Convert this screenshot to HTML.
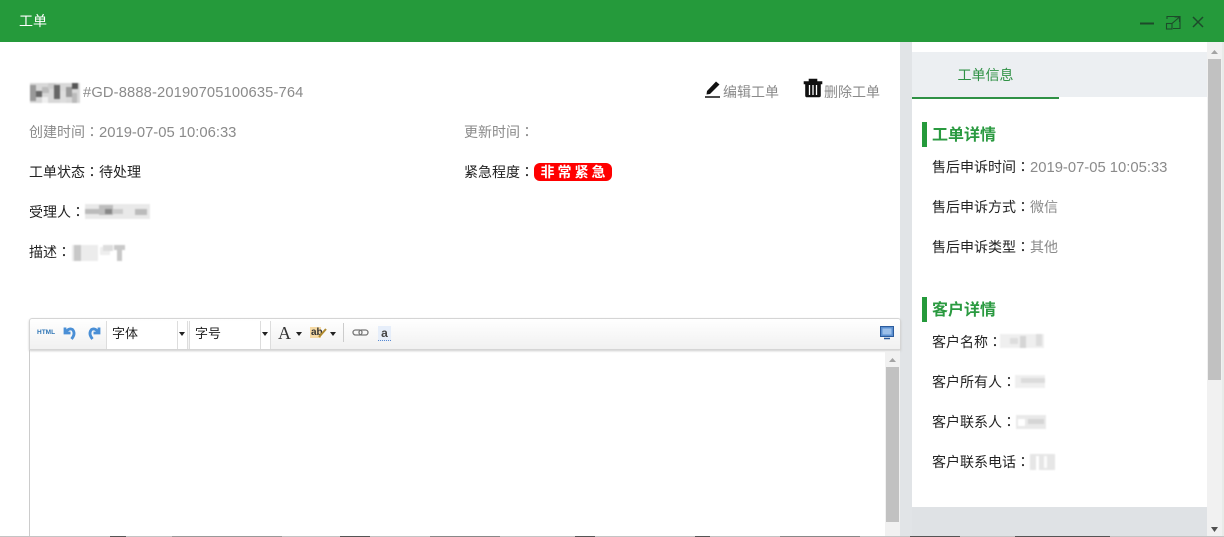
<!DOCTYPE html>
<html><head><meta charset="utf-8"><title>工单</title>
<style>
html,body{margin:0;padding:0;width:1224px;height:537px;overflow:hidden;background:#fff}
body{position:relative;font:14px/20px "Liberation Sans","Noto Sans CJK SC",sans-serif;color:#222}
.a{position:absolute;white-space:nowrap}
.g{color:#8a8a8a}
.d{font-size:14.8px}
i{font-style:normal;font-family:"Noto Sans CJK TC",sans-serif}
.h{font-size:16px;font-weight:700;color:#2a9a40;line-height:24px}
.bar{position:absolute;left:922px;width:5px;height:25px;background:#259a3b}
svg{position:absolute;overflow:visible}
svg.b{filter:blur(.7px)}
.sel{position:absolute;top:321px;height:28px;background:#fff;border-left:1px solid #ddd;border-right:1px solid #ddd;box-sizing:border-box;font-size:13px;line-height:25px;padding-left:5px}
.sel:after{content:"";position:absolute;right:9px;top:0;height:28px;width:1px;background:#ddd}
.tri{position:absolute;width:0;height:0;border:3px solid transparent;border-top:4px solid #222;border-bottom:0}
</style></head><body>
<div class="a" style="left:0;top:0;width:1224px;height:42px;background:#259a3b"></div>
<div class="a" style="left:19px;top:11px;color:#fff;font-size:14px">工单</div>
<svg style="left:1130px;top:8px" width="85" height="30" fill="none" stroke="#1d4a2a">
<path d="M10 15.5H24" stroke-width="2"/>
<path d="M37 11V8.500H50V20.500H43M42 15.500L49 9.500M44.500 9H49.500V14" stroke-width="1.100"/><rect x="36.500" y="15.500" width="5.500" height="5.500" stroke-width="1.100"/>
<path d="M63 9L73 19M73 9L63 19" stroke-width="1.500"/></svg>

<div class="a" style="left:900px;top:42px;width:12px;height:495px;background:#e1e4e7"></div>
<div class="a" style="left:912px;top:507px;width:295px;height:30px;background:#dfe2e5"></div>
<div class="a" style="left:912px;top:52px;width:295px;height:45px;background:#eceff2"></div>
<div class="a" style="left:912px;top:97px;width:147px;height:2px;background:#2f9145"></div>
<div class="a" style="left:957.500px;top:65px;font-size:14px;color:#2f9145">工单信息</div>
<div class="a" style="left:1207px;top:42px;width:15px;height:495px;background:#f1f1f1"></div>
<div class="a" style="left:1208px;top:59px;width:13px;height:321px;background:#c1c1c1"></div>
<div class="a" style="left:1222px;top:42px;width:2px;height:495px;background:#e8ebe9"></div>
<svg style="left:1207px;top:48px" width="15" height="8"><path d="M4 6L7.500 2L11 6Z" fill="#a3a3a3"/></svg>
<svg style="left:1207px;top:526px" width="15" height="8"><path d="M4 1H11L7.500 6Z" fill="#505050"/></svg>

<!-- title row -->
<svg class="b" style="left:30px;top:83px" width="52" height="22" shape-rendering="crispEdges">
<rect width="50" height="20" fill="#d8d8d8"/><rect x="0" y="2" width="6" height="16" fill="#999"/><rect x="6" y="8" width="6" height="6" fill="#666"/><rect x="12" y="4" width="7" height="6" fill="#bbb"/><rect x="18" y="0" width="8" height="6" fill="#ccc"/><rect x="24" y="2" width="6" height="14" fill="#666"/><rect x="30" y="8" width="6" height="12" fill="#ddd"/><rect x="36" y="4" width="6" height="10" fill="#999"/><rect x="42" y="0" width="6" height="6" fill="#555"/><rect x="42" y="10" width="5" height="10" fill="#bbb"/><rect x="12" y="14" width="6" height="6" fill="#f0f0f0"/></svg>
<div class="a g" style="left:83px;top:82.500px;font-size:14.7px;letter-spacing:.15px">#GD-8888-20190705100635-764</div>
<svg style="left:704px;top:79px" width="20" height="20"><path d="M3 12L12 2.500L15.500 5.500L6 15L2.500 15.500Z" fill="#111"/><path d="M1 18H16" stroke="#111" stroke-width="1.500"/></svg>
<div class="a g" style="left:723px;top:82px;font-size:14px">编辑工单</div>
<svg style="left:803px;top:77px" width="20" height="21"><path d="M1 4.500H19V7H17.500V18.500Q17.500 20 16 20H4Q2.500 20 2.500 18.500V7H1ZM6 4.500V2H14V4.500" fill="#111" stroke="#111" stroke-width=".6"/><path d="M6.500 8V18M10 8V18M13.500 8V18" stroke="#fff" stroke-width="1.300"/></svg>
<div class="a g" style="left:824px;top:82px;font-size:14px">删除工单</div>

<div class="a g" style="left:29px;top:122px">创建时间<i>：</i><span class="d">2019-07-05 10:06:33</span></div>
<div class="a g" style="left:464px;top:122px">更新时间<i>：</i></div>
<div class="a" style="left:29px;top:162px">工单状态<i>：</i>待处理</div>
<div class="a" style="left:464px;top:162px">紧急程度<i>：</i></div>
<div class="a" style="left:534px;top:163px;width:78px;height:18px;padding-left:3px;box-sizing:border-box;background:#f00;border-radius:6px;color:#fff;font-size:14px;font-weight:700;line-height:18px;text-align:center;letter-spacing:3px">非常紧急</div>
<div class="a" style="left:29px;top:202px">受理人<i>：</i></div>
<svg class="b" style="left:85px;top:204px" width="66" height="16" shape-rendering="crispEdges"><rect width="65" height="15" fill="#e9e9e9"/><rect y="5" x="0" width="14" height="5" fill="#bbb"/><rect x="14" y="1" width="14" height="10" fill="#bdbdbd"/><rect x="20" y="5" width="7" height="5" fill="#888"/><rect x="28" y="5" width="10" height="5" fill="#ccc"/><rect x="50" y="5" width="12" height="6" fill="#bbb"/></svg>
<div class="a" style="left:29px;top:242px">描述<i>：</i></div>
<svg class="b" style="left:70px;top:244px" width="56" height="18" shape-rendering="crispEdges"><rect x="2" y="1" width="26" height="16" fill="#ececec"/><rect x="4" y="1" width="7" height="16" fill="#c8c8c8"/><rect x="30" y="3" width="10" height="8" fill="#eee"/><rect x="33" y="1" width="10" height="6" fill="#ddd"/><rect x="44" y="1" width="11" height="5" fill="#c9c9c9"/><rect x="47" y="5" width="5" height="12" fill="#c8c8c8"/></svg>

<!-- editor -->
<div class="a" style="left:29px;top:318px;width:872px;height:32px;box-sizing:border-box;border:1px solid #d5d5d5;border-radius:3px 3px 0 0;background:linear-gradient(#fff,#f1f1f1);box-shadow:0 1px 2px #ccc"></div>
<div class="a" style="left:29px;top:350px;width:1px;height:187px;background:#ccc"></div>
<div class="a" style="left:885px;top:352px;width:15px;height:185px;background:#f1f1f1"></div>
<div class="a" style="left:886px;top:367px;width:13px;height:155px;background:#c1c1c1"></div>
<svg style="left:885px;top:354px" width="15" height="10"><path d="M4 8L7.500 4L11 8Z" fill="#a3a3a3"/></svg>
<div class="a" style="left:37px;top:328px;font-size:6.500px;line-height:10px;font-weight:700;color:#2d74b5">HTML</div>
<svg style="left:62px;top:325px" width="40" height="16" fill="none" stroke="#4a8fd6" stroke-width="2.800"><path d="M3 2.500V8H8.500M3.500 7.500Q7 2.500 10.500 4.500Q14 8.500 9.500 14"/><path d="M37 2.500V8H31.500M36.500 7.500Q33 2.500 29.500 4.500Q26 8.500 30.500 14"/></svg>
<div class="sel" style="left:106px;width:82px;">字体</div>
<div class="sel" style="left:189px;width:82px;">字号</div>
<div class="tri" style="left:179px;top:332px"></div>
<div class="tri" style="left:262px;top:332px"></div>
<div class="a" style="left:278px;top:322px;font:400 18px/22px 'Liberation Serif',serif;color:#333">A</div>
<div class="tri" style="left:296px;top:332px"></div>
<div class="a" style="left:310px;top:327px;width:11px;height:11px;background:#f5d9a4"></div>
<div class="a" style="left:311px;top:326px;font:700 10px/14px 'Liberation Sans',sans-serif;color:#333">ab</div>
<svg style="left:318px;top:327px" width="10" height="12"><path d="M1 10L8 2" stroke="#b08a2e" stroke-width="2"/></svg>
<div class="tri" style="left:330px;top:332px"></div>
<div class="a" style="left:343px;top:323px;width:1px;height:19px;background:#ccc"></div>
<svg style="left:352px;top:328px" width="18" height="10" fill="none" stroke="#777" stroke-width="1.300"><rect x="1" y="2" width="9" height="5" rx="2.500"/><rect x="7" y="2" width="9" height="5" rx="2.500"/></svg>
<div class="a" style="left:378px;top:326px;width:13px;height:15px;background:#e6eefa;border-bottom:1px dotted #5a8ad0;box-sizing:border-box;text-align:center;font:700 12px/14px 'Liberation Sans',sans-serif;color:#444">a</div>
<svg style="left:880px;top:326px" width="14" height="14"><rect x=".5" y=".5" width="13" height="10" fill="#5b8fd0" stroke="#2b5b9c"/><rect x="2.500" y="2.500" width="9" height="6" fill="#9cc0ea"/><path d="M4 12.500H10" stroke="#2b5b9c" stroke-width="1.500"/></svg>

<!-- side -->
<div class="bar" style="top:122px"></div>
<div class="a h" style="left:932px;top:124px">工单详情</div>
<div class="a" style="left:932px;top:157px">售后申诉时间<i>：</i><span class="g d">2019-07-05 10:05:33</span></div>
<div class="a" style="left:932px;top:197px">售后申诉方式<i>：</i><span class="g">微信</span></div>
<div class="a" style="left:932px;top:237px">售后申诉类型<i>：</i><span class="g">其他</span></div>
<div class="bar" style="top:297px"></div>
<div class="a h" style="left:932px;top:299px">客户详情</div>
<div class="a" style="left:932px;top:332px">客户名称<i>：</i></div>
<svg class="b" style="left:1000px;top:334px" width="46" height="16" shape-rendering="crispEdges"><rect width="44" height="14" fill="#efefef"/><rect x="10" y="4" width="8" height="6" fill="#ddd"/><rect x="20" y="2" width="6" height="12" fill="#d5d5d5"/><rect x="36" y="0" width="6" height="12" fill="#ddd"/></svg>
<div class="a" style="left:932px;top:372px">客户所有人<i>：</i></div>
<svg class="b" style="left:1015px;top:375px" width="32" height="15" shape-rendering="crispEdges"><rect width="30" height="13" fill="#efefef"/><rect x="6" y="3" width="24" height="5" fill="#dcdcdc"/></svg>
<div class="a" style="left:932px;top:412px">客户联系人<i>：</i></div>
<svg class="b" style="left:1016px;top:415px" width="32" height="15" shape-rendering="crispEdges"><rect width="30" height="14" fill="#e9e9e9"/><rect x="2" y="4" width="7" height="7" fill="#fff"/><rect x="12" y="4" width="16" height="5" fill="#d5d5d5"/></svg>
<div class="a" style="left:932px;top:452px">客户联系电话<i>：</i></div>
<svg class="b" style="left:1030px;top:454px" width="27" height="17" shape-rendering="crispEdges"><rect width="25" height="16" fill="#e6e6e6"/><rect x="6" y="2" width="3" height="14" fill="#fff"/><rect x="14" y="2" width="3" height="12" fill="#fbfbfb"/></svg>

<!-- bottom edge -->
<div class="a" style="left:0;top:536px;width:1224px;height:1px;background:#c4c4c4"></div>
<svg style="left:0;top:536px" width="1224" height="1" shape-rendering="crispEdges" fill="#555">
<rect x="110" width="16" height="1"/><rect x="172" width="110" height="1" fill="#999"/><rect x="340" width="30" height="1"/><rect x="430" width="70" height="1" fill="#888"/><rect x="575" width="20" height="1"/><rect x="695" width="15" height="1"/><rect x="780" width="80" height="1" fill="#888"/><rect x="910" width="50" height="1"/><rect x="1015" width="95" height="1"/></svg>
</body></html>
